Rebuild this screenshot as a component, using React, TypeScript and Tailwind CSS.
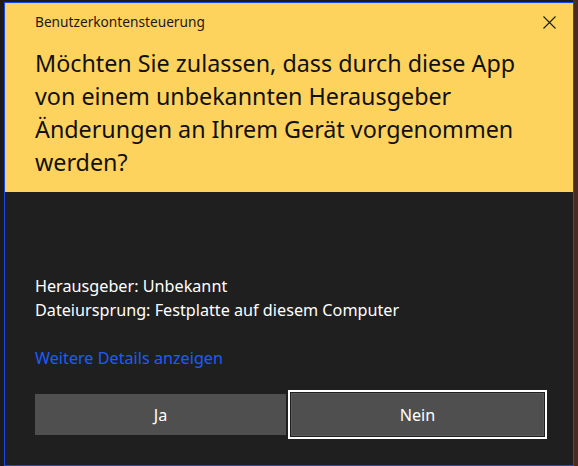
import React from "react";

export default function App() {
  const font = { fontFamily: '"Noto Sans", "Open Sans", sans-serif' };
  return (
    <div
      className="w-[578px] h-[466px] bg-[#1b1b1b] relative overflow-hidden"
      style={font}
    >
      <div className="absolute right-0 top-0 w-[5px] h-full bg-[#4a2a22]" />
      <div className="absolute left-[4px] top-[2px] w-[570px] h-[464px] border border-[#1748f0] bg-[#1f1f1f] flex flex-col">
        <div className="bg-[#fed35d] h-[189px] px-[30px] pt-[10px] flex flex-col">
          <div className="flex items-center justify-between h-[18px]">
            <span className="text-[13.7px] leading-[18px] text-[#1a1a1a]">
              Benutzerkontensteuerung
            </span>
            <svg width="13" height="13" viewBox="0 0 13 13" className="mr-[-13px]">
              <path d="M0.5 0.5 L12.5 12.5 M12.5 0.5 L0.5 12.5" stroke="#1a1a1a" strokeWidth="1.1" />
            </svg>
          </div>
          <div className="mt-[16px] text-[23.3px] leading-[33px] text-[#111]">
            Möchten Sie zulassen, dass durch diese App
            <br />
            von einem unbekannten Herausgeber
            <br />
            Änderungen an Ihrem Gerät vorgenommen
            <br />
            werden?
          </div>
        </div>
        <div className="px-[30px] pt-[82px] text-[16.2px] leading-[24px] text-white">
          <div>Herausgeber: Unbekannt</div>
          <div>Dateiursprung: Festplatte auf diesem Computer</div>
          <div className="mt-[24px] text-[#1a5cff]">Weitere Details anzeigen</div>
          <div className="mt-[20px] flex items-center gap-[2px]">
            <div className="shrink-0 w-[251px] h-[41px] bg-[#4f4f4f] flex items-center justify-center text-white">
              Ja
            </div>
            <div className="shrink-0 w-[259px] h-[49px] border-2 border-white p-[1px] bg-[#1f1f1f]">
              <div className="w-full h-full bg-[#4f4f4f] border border-[#5a5a5a] flex items-center justify-center text-white">
                Nein
              </div>
            </div>
          </div>
        </div>
      </div>
    </div>
  );
}
